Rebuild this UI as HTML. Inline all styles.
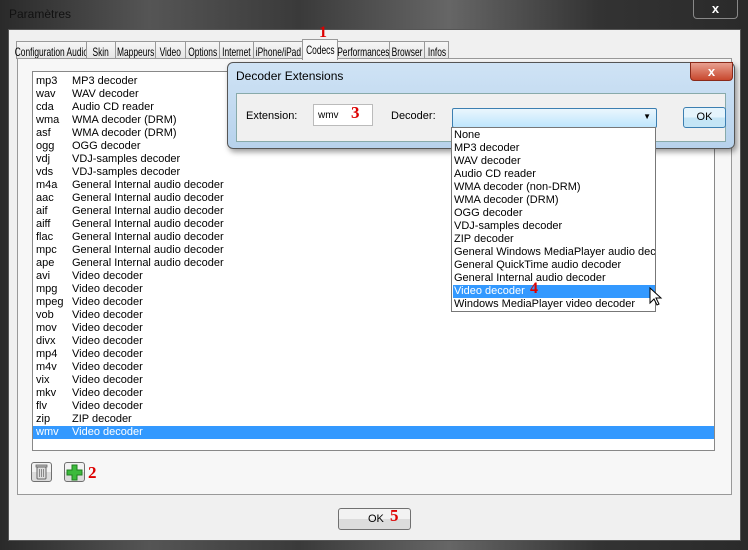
<!DOCTYPE html>
<html><head><style>
*{margin:0;padding:0;box-sizing:border-box}
body{width:748px;height:550px;overflow:hidden;background:#222;font-family:"Liberation Sans",sans-serif;font-size:11px;color:#000;position:relative}
.abs{position:absolute}
#frame{left:0;top:0;width:748px;height:550px;background:linear-gradient(90deg,#2a2a2a,#555 20%,#3a3a3a 40%,#666 60%,#333 80%,#2a2a2a)}
#title{left:9px;top:7px;font-size:12px;color:#111}
#client{left:8px;top:29px;width:733px;height:512px;background:#f0f0f0;border:1px solid #555}
.tab{position:absolute;top:41px;height:18px;border:1px solid #999;border-bottom:none;background:linear-gradient(#f6f6f6,#e4e4e4);line-height:16px;padding-top:2px;font-size:12px;white-space:nowrap;display:flex;justify-content:center}
.tab span{display:block;flex-shrink:0;transform:scaleX(.7);transform-origin:center}
#panel{left:17px;top:58px;width:715px;height:437px;border:1px solid #999;background:#f7f7f7}
#list{left:32px;top:71px;width:683px;height:380px;border:1px solid #888;background:#fff}
.row{position:absolute;left:0;width:681px;height:13px;line-height:13px}
.row span{position:absolute}
.row .a{left:3px}.row .b{left:39px}
.sel{background:#3399ff;color:#fff}
.red{color:#d00;font-family:"Liberation Serif",serif;font-weight:bold;font-size:17px;position:absolute}
#dlg{left:227px;top:62px;width:508px;height:87px;border:1px solid #555;border-radius:6px;background:linear-gradient(#cfe3f5,#b7d2ec);box-shadow:2px 3px 6px rgba(0,0,0,.4)}
#dlgin{left:8px;top:30px;width:490px;height:49px;border:1px solid #8aa;background:#f0f0f0}
.btn{position:absolute;border:1px solid #707070;border-radius:3px;background:linear-gradient(#f2f2f2 50%,#dcdcdc 50%);text-align:center}
#dd{left:451px;top:127px;width:205px;height:185px;border:1px solid #777;background:#fff}
.it{position:absolute;left:1px;width:202px;height:13px;line-height:13px;padding-left:1px;white-space:nowrap;overflow:hidden}
</style></head><body>
<div class="abs" id="frame"></div>
<div class="abs" id="title">Paramètres</div>
<div class="abs" style="left:693px;top:0;width:45px;height:19px;border:1px solid #888;border-top:none;border-radius:0 0 4px 4px;color:#fff;font-weight:bold;text-align:center;font-size:13px;line-height:18px">x</div>
<div class="abs" id="client"></div>
<div class="tab" style="left:16px;width:71px"><span>Configuration Audio</span></div>
<div class="tab" style="left:86px;width:30px"><span>Skin</span></div>
<div class="tab" style="left:115px;width:41px"><span>Mappeurs</span></div>
<div class="tab" style="left:155px;width:31px"><span>Video</span></div>
<div class="tab" style="left:185px;width:35px"><span>Options</span></div>
<div class="tab" style="left:219px;width:35px"><span>Internet</span></div>
<div class="tab" style="left:253px;width:50px"><span>iPhone/iPad</span></div>
<div class="tab" style="left:337px;width:53px"><span>Performances</span></div>
<div class="tab" style="left:389px;width:36px"><span>Browser</span></div>
<div class="tab" style="left:424px;width:25px"><span>Infos</span></div>
<div class="abs" id="panel"></div>
<div class="tab" style="left:302px;top:39px;height:21px;width:36px;background:#f7f7f7"><span>Codecs</span></div>
<div class="red" style="left:319px;top:24px;font-size:16px">1</div>
<div class="abs" id="list">
<div class="row" style="top:3px"><span class="a">mp3</span><span class="b">MP3 decoder</span></div>
<div class="row" style="top:16px"><span class="a">wav</span><span class="b">WAV decoder</span></div>
<div class="row" style="top:29px"><span class="a">cda</span><span class="b">Audio CD reader</span></div>
<div class="row" style="top:42px"><span class="a">wma</span><span class="b">WMA decoder (DRM)</span></div>
<div class="row" style="top:55px"><span class="a">asf</span><span class="b">WMA decoder (DRM)</span></div>
<div class="row" style="top:68px"><span class="a">ogg</span><span class="b">OGG decoder</span></div>
<div class="row" style="top:81px"><span class="a">vdj</span><span class="b">VDJ-samples decoder</span></div>
<div class="row" style="top:94px"><span class="a">vds</span><span class="b">VDJ-samples decoder</span></div>
<div class="row" style="top:107px"><span class="a">m4a</span><span class="b">General Internal audio decoder</span></div>
<div class="row" style="top:120px"><span class="a">aac</span><span class="b">General Internal audio decoder</span></div>
<div class="row" style="top:133px"><span class="a">aif</span><span class="b">General Internal audio decoder</span></div>
<div class="row" style="top:146px"><span class="a">aiff</span><span class="b">General Internal audio decoder</span></div>
<div class="row" style="top:159px"><span class="a">flac</span><span class="b">General Internal audio decoder</span></div>
<div class="row" style="top:172px"><span class="a">mpc</span><span class="b">General Internal audio decoder</span></div>
<div class="row" style="top:185px"><span class="a">ape</span><span class="b">General Internal audio decoder</span></div>
<div class="row" style="top:198px"><span class="a">avi</span><span class="b">Video decoder</span></div>
<div class="row" style="top:211px"><span class="a">mpg</span><span class="b">Video decoder</span></div>
<div class="row" style="top:224px"><span class="a">mpeg</span><span class="b">Video decoder</span></div>
<div class="row" style="top:237px"><span class="a">vob</span><span class="b">Video decoder</span></div>
<div class="row" style="top:250px"><span class="a">mov</span><span class="b">Video decoder</span></div>
<div class="row" style="top:263px"><span class="a">divx</span><span class="b">Video decoder</span></div>
<div class="row" style="top:276px"><span class="a">mp4</span><span class="b">Video decoder</span></div>
<div class="row" style="top:289px"><span class="a">m4v</span><span class="b">Video decoder</span></div>
<div class="row" style="top:302px"><span class="a">vix</span><span class="b">Video decoder</span></div>
<div class="row" style="top:315px"><span class="a">mkv</span><span class="b">Video decoder</span></div>
<div class="row" style="top:328px"><span class="a">flv</span><span class="b">Video decoder</span></div>
<div class="row" style="top:341px"><span class="a">zip</span><span class="b">ZIP decoder</span></div>
<div class="row sel" style="top:354px"><span class="a">wmv</span><span class="b">Video decoder</span></div>
</div>
<div class="btn" style="left:31px;top:462px;width:21px;height:20px;border-radius:3px">
<svg width="19" height="18" viewBox="0 0 19 18"><rect x="5" y="4" width="9" height="12" rx="1" fill="#ddd" stroke="#666"/><rect x="4" y="2" width="11" height="2" fill="#bbb" stroke="#666" stroke-width=".8"/><path d="M7.5 6v8M9.5 6v8M11.5 6v8" stroke="#888"/></svg></div>
<div class="btn" style="left:64px;top:462px;width:21px;height:20px">
<svg width="19" height="18" viewBox="0 0 19 18"><path d="M7 2h5v5h5v5h-5v5H7v-5H2V7h5z" fill="#3cba3c" stroke="#1f7f1f"/></svg></div>
<div class="red" style="left:88px;top:463px">2</div>
<div class="btn" style="left:338px;top:508px;width:73px;height:22px;line-height:20px;padding-right:2px;text-align:left;padding-left:29px">OK</div>
<div class="red" style="left:390px;top:506px">5</div>

<div class="abs" id="dlg">
<div class="abs" style="left:8px;top:6px;font-size:12px">Decoder Extensions</div>
<div class="abs" style="left:462px;top:-1px;width:43px;height:19px;border:1px solid #8a2a1a;border-radius:0 0 4px 4px;background:linear-gradient(#e8a090,#c8482e);color:#fff;font-weight:bold;text-align:center;line-height:17px;font-size:13px">x</div>
<div class="abs" id="dlgin">
<div class="abs" style="left:9px;top:16px">Extension:</div>
<div class="abs" style="left:76px;top:10px;width:60px;height:22px;background:#fff;border:1px solid #bbb;padding:5px 4px;font-size:10px">wmv</div>
<div class="red" style="left:114px;top:9px">3</div>
<div class="abs" style="left:154px;top:16px">Decoder:</div>
<div class="abs" style="left:215px;top:14px;width:205px;height:20px;border:1px solid #3c7fb1;border-radius:2px;background:linear-gradient(#eaf6fd,#bee6fd)"><span style="position:absolute;right:5px;top:3px;font-size:8px">▼</span></div>
<div class="btn" style="left:446px;top:13px;width:43px;height:21px;line-height:19px;border-color:#3c7fb1;background:linear-gradient(#e5f4fc 50%,#c4e5f6 50%)">OK</div>
</div>
</div>
<div class="abs" id="dd">
<div class="it" style="top:1px">None</div>
<div class="it" style="top:14px">MP3 decoder</div>
<div class="it" style="top:27px">WAV decoder</div>
<div class="it" style="top:40px">Audio CD reader</div>
<div class="it" style="top:53px">WMA decoder (non-DRM)</div>
<div class="it" style="top:66px">WMA decoder (DRM)</div>
<div class="it" style="top:79px">OGG decoder</div>
<div class="it" style="top:92px">VDJ-samples decoder</div>
<div class="it" style="top:105px">ZIP decoder</div>
<div class="it" style="top:118px">General Windows MediaPlayer audio decoder</div>
<div class="it" style="top:131px">General QuickTime audio decoder</div>
<div class="it" style="top:144px">General Internal audio decoder</div>
<div class="it sel" style="top:157px">Video decoder</div>
<div class="it" style="top:170px">Windows MediaPlayer video decoder</div>
</div>
<div class="red" style="left:530px;top:280px;font-size:16px">4</div>
<svg class="abs" style="left:649px;top:287px" width="14" height="20" viewBox="0 0 14 20"><path d="M1 1v15l4-4 3 6 2-1-3-6h5z" fill="#fff" stroke="#000"/></svg>
</body></html>
